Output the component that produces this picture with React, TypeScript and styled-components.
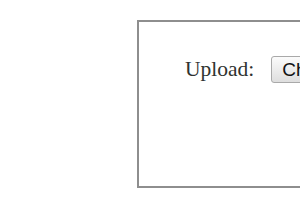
import styled, { createGlobalStyle } from 'styled-components';

const GlobalStyle = createGlobalStyle`
  html, body {
    margin: 0;
    padding: 0;
    background: #ffffff;
    overflow: hidden;
  }
`

const Page = styled.div`
  width: 300px;
  height: 210px;
  padding: 20px 0 0 137px;
  box-sizing: border-box;
`

const Panel = styled.div`
  width: 320px;
  height: 168px;
  box-sizing: border-box;
  border: 2px solid #8e8e8e;
  padding: 34px 0 0 46px;
`

const Row = styled.div`
  display: flex;
  align-items: center;
  gap: 17px;
`

const Label = styled.label`
  font-family: "Liberation Serif", "Times New Roman", serif;
  font-size: 21.5px;
  color: #2f3330;
  white-space: nowrap;
`

const FileButton = styled.button`
  height: 27px;
  box-sizing: border-box;
  padding: 0 10px;
  border: 1px solid #a9a9a9;
  border-radius: 3px;
  background: linear-gradient(#fbfbfb, #dedede);
  font-family: "Liberation Sans", Arial, sans-serif;
  font-size: 19px;
  color: #111;
  white-space: nowrap;
  flex-shrink: 0;
`

const App = (): JSX.Element => {
  return (
    <>
      <GlobalStyle />
      <Page>
        <Panel>
          <Row>
            <Label>Upload:</Label>
            <FileButton>Choose File</FileButton>
          </Row>
        </Panel>
      </Page>
    </>
  )
}

export default App
